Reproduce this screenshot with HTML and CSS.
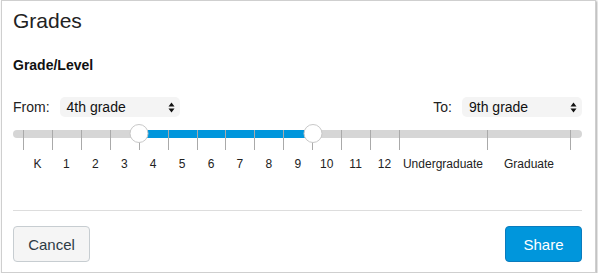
FILE: index.html
```html
<!DOCTYPE html>
<html>
<head>
    <title>Grades</title>
    <meta name="viewport" content="width=device-width, initial-scale=1">
    <link rel="stylesheet" href="styles.css">
</head>
<body>
    <div class="dialog">
        <h2 class="dialog-title">Grades</h2>

        <div class="section-label">Grade/Level</div>

        <div class="range-row">
            <div class="range-field">
                <span class="range-label">From:</span>
                <div class="fake-select">
                    <span>4th grade</span>
                    <svg class="select-arrows" width="7" height="11" viewBox="0 0 7 11">
                        <path d="M3.5 0.5 L6.5 4.5 L0.5 4.5 Z" fill="#111"/>
                        <path d="M3.5 10.5 L6.5 6.5 L0.5 6.5 Z" fill="#111"/>
                    </svg>
                </div>
            </div>
            <div class="range-field">
                <span class="range-label">To:</span>
                <div class="fake-select">
                    <span>9th grade</span>
                    <svg class="select-arrows" width="7" height="11" viewBox="0 0 7 11">
                        <path d="M3.5 0.5 L6.5 4.5 L0.5 4.5 Z" fill="#111"/>
                        <path d="M3.5 10.5 L6.5 6.5 L0.5 6.5 Z" fill="#111"/>
                    </svg>
                </div>
            </div>
        </div>

        <div class="slider">
            <div class="track">
                <!-- fill runs from the "4" tick to the "10" tick -->
                <div class="track-fill" style="left: 125.7px; width: 173.5px;"></div>
            </div>
            <div class="scale ticks">
                <div></div><div></div><div></div><div></div><div></div>
                <div></div><div></div><div></div><div></div><div></div>
                <div></div><div></div><div></div><div></div><div class="last"></div>
            </div>
            <div class="scale labels">
                <div>K</div><div>1</div><div>2</div><div>3</div><div>4</div>
                <div>5</div><div>6</div><div>7</div><div>8</div><div>9</div>
                <div>10</div><div>11</div><div>12</div><div>Undergraduate</div><div>Graduate</div>
            </div>
            <div class="handle" style="left: 125.7px;"></div>
            <div class="handle" style="left: 299.2px;"></div>
        </div>

        <hr class="divider">

        <div class="actions">
            <button class="btn">Cancel</button>
            <button class="btn btn-primary">Share</button>
        </div>
    </div>
</body>
</html>
```

FILE: styles.css
```css
body {
    margin: 0;
    background: #fff;
    font-family: "Liberation Sans", Arial, sans-serif;
    color: #333;
}
.dialog {
    box-sizing: border-box;
    width: 595px;
    height: 273px;
    margin-left: 1px;
    padding: 8px 13px 0 11px;
    background: #fff;
    border: 1px solid #cfcfcf;
    box-shadow: 1px 1px 2px rgba(0,0,0,0.35);
}
.dialog-title {
    margin: 0;
    font-size: 21px;
    line-height: 24px;
    font-weight: normal;
    color: #222;
}
.section-label {
    margin-top: 23px;
    font-size: 14px;
    line-height: 18px;
    font-weight: bold;
    color: #111;
}
.range-row {
    display: flex;
    justify-content: space-between;
    margin-top: 23px;
}
.range-field {
    display: flex;
    align-items: center;
}
.range-label {
    font-size: 14px;
    color: #222;
    margin-right: 10px;
}
.fake-select {
    box-sizing: border-box;
    width: 120px;
    height: 20px;
    padding: 0 5px 0 7px;
    display: flex;
    align-items: center;
    justify-content: space-between;
    background: #f4f4f4;
    border-radius: 5px;
    font-size: 14px;
    color: #111;
}
.select-arrows {
    display: block;
}
.slider {
    position: relative;
    margin-top: 13px;
}
.track {
    position: absolute;
    top: 0;
    left: 0;
    right: 0;
    height: 8px;
    background: #d6d6d6;
    border-radius: 4px;
}
.track-fill {
    position: absolute;
    top: 0;
    height: 8px;
    background: #0096dc;
}
.scale {
    position: relative;
    display: grid;
    grid-template-columns: repeat(13, 1fr) 88px 84px;
    width: 548px;
    margin-left: 10px;
}
.ticks div {
    height: 20px;
    border-left: 1px solid #aaa;
}
.ticks div.last {
    border-right: 1px solid #aaa;
}
.labels {
    margin-top: 7px;
}
.labels div {
    text-align: center;
    font-size: 12px;
    line-height: 14px;
    color: #222;
}
.handle {
    position: absolute;
    top: -6px;
    width: 19px;
    height: 19px;
    margin-left: 0.5px;
    transform: translateX(-50%);
    box-sizing: border-box;
    background: #fff;
    border: 1px solid #c8c8c8;
    border-radius: 50%;
}
.divider {
    margin: 39px 0 0 0;
    border: none;
    border-top: 1px solid #ddd;
}
.actions {
    display: flex;
    justify-content: space-between;
    margin-top: 15px;
}
.btn {
    width: 77px;
    height: 36px;
    padding: 0;
    background: #f5f5f5;
    border: 1px solid #c7cdd1;
    border-radius: 4px;
    font-family: "Liberation Sans", Arial, sans-serif;
    font-size: 15px;
    color: #2d3b45;
}
.btn-primary {
    background: #0096dc;
    border-color: #0a7bbd;
    color: #fff;
}
```
